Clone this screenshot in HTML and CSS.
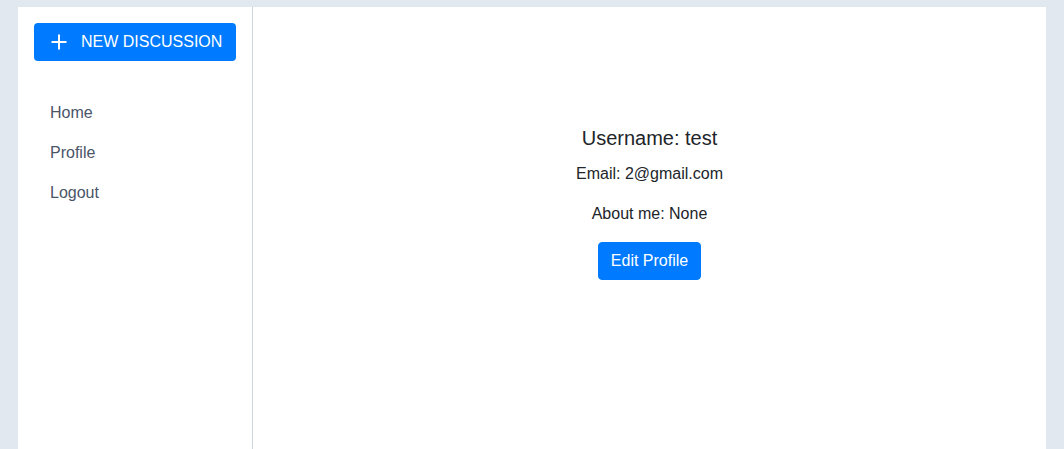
FILE: index.html
```html
<!DOCTYPE html>
<html>
<head>
<meta charset="utf-8">
<link rel="stylesheet" href="styles.css">
</head>
<body>
<div class="shell">
  <aside class="sidebar">
    <button class="new-btn">
      <svg class="plus" width="16" height="16" viewBox="0 0 16 16"><path d="M8 0.5V15.5M0.5 8H15.5" stroke="#fff" stroke-width="2" fill="none"/></svg>
      <span>NEW DISCUSSION</span>
    </button>
    <nav class="nav">
      <a class="nav-link" href="#">Home</a>
      <a class="nav-link" href="#">Profile</a>
      <a class="nav-link" href="#">Logout</a>
    </nav>
  </aside>
  <main class="main">
    <h2 class="username">Username: test</h2>
    <p class="info email">Email: 2@gmail.com</p>
    <p class="info about">About me: None</p>
    <button class="edit-btn">Edit Profile</button>
  </main>
</div>
</body>
</html>
```
FILE: styles.css
```css
* { box-sizing: border-box; }
html, body { height: 100%; }
body {
  margin: 0;
  background: #e2e8f0;
  font-family: "Liberation Sans", Arial, sans-serif;
  color: #212529;
}
.shell {
  margin: 7px 18px 0;
  background: #fff;
  display: flex;
  min-height: calc(100% - 7px);
}
.sidebar {
  width: 235px;
  flex: none;
  border-right: 1px solid #cbd5e0;
  padding: 16px;
}
.new-btn {
  width: 202px;
  height: 38px;
  background: #007bff;
  color: #fff;
  border: none;
  border-radius: 4px;
  display: flex;
  align-items: center;
  padding: 0 0 0 17px;
  font-family: inherit;
  font-size: 16px;
  cursor: pointer;
}
.new-btn .plus { margin-right: 14px; flex: none; }
.nav {
  display: flex;
  flex-direction: column;
  margin-top: 32px;
}
.nav-link {
  display: block;
  padding: 8px 16px;
  line-height: 24px;
  font-size: 16px;
  color: #4a5568;
  text-decoration: none;
}
.main {
  flex: 1;
  display: flex;
  flex-direction: column;
  align-items: center;
  padding-top: 119px;
}
.username {
  margin: 0;
  font-size: 20px;
  font-weight: normal;
  line-height: 24px;
}
.info {
  margin: 0;
  font-size: 16px;
  line-height: 24px;
}
.email { margin-top: 12px; }
.about { margin-top: 16px; }
.edit-btn {
  margin-top: 16px;
  background: #007bff;
  color: #fff;
  border: 1px solid #007bff;
  border-radius: 4px;
  padding: 6px 12px;
  font-family: inherit;
  font-size: 16px;
  line-height: 24px;
  cursor: pointer;
}
```
